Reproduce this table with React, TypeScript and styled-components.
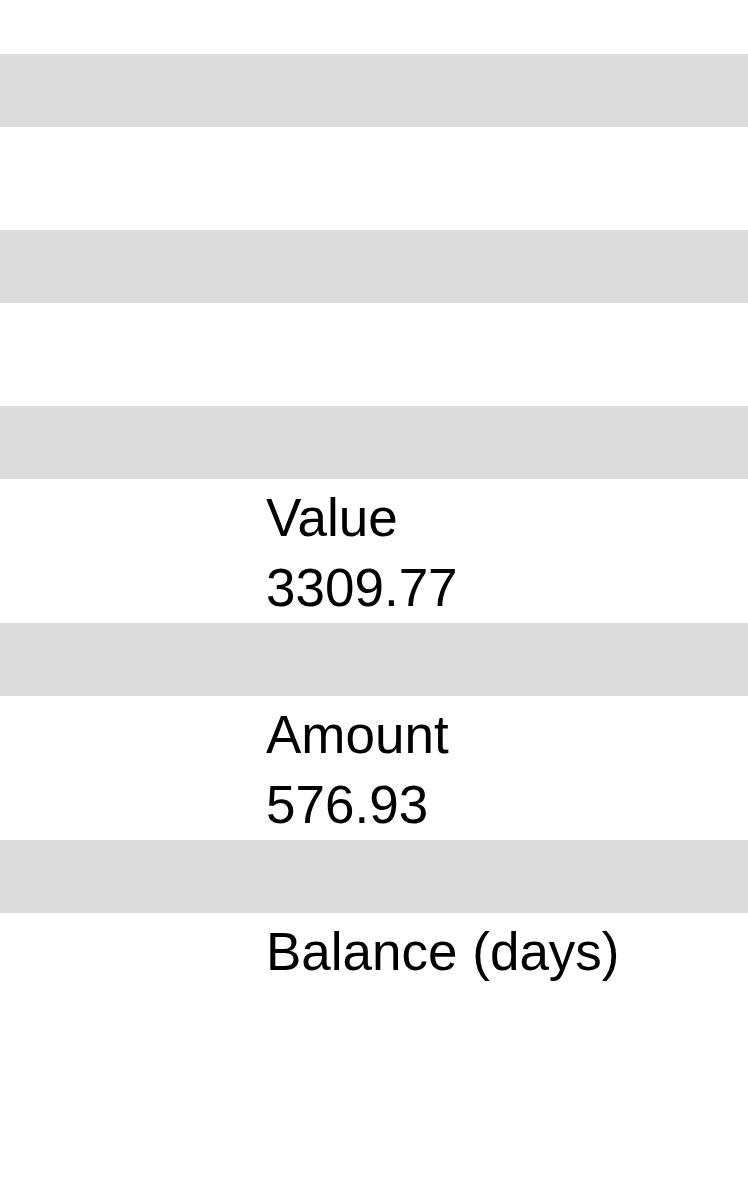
import * as React from 'react';
import styled, { createGlobalStyle } from 'styled-components';

interface Field {
  label?: string
  value?: string
}

const fields: Field[] = [
  {},
  {},
  { label: 'Value', value: '3309.77' },
  { label: 'Amount', value: '576.93' },
  { label: 'Balance (days)' },
];

export default function App() {
  return (
    <>
      <GlobalStyle />
      <Page>
        {fields.map((f, i) =>
          <React.Fragment key={`field_${i}`}>
            <Band />
            <Row empty={!f.label}>
              <Spacer />
              <Cell>
                {f.label && <Line>{f.label}</Line>}
                {f.value && <Line>{f.value}</Line>}
              </Cell>
            </Row>
          </React.Fragment>
        )}
      </Page>
    </>
  );
}

const GlobalStyle = createGlobalStyle`
  html, body {
    margin: 0;
    padding: 0;
    background: #ffffff;
  }
  body {
    font-family: "Liberation Sans", Arial, Helvetica, sans-serif;
    color: #000000;
  }
`;

const Page = styled.div`
  width: 748px;
  min-height: 1180px;
  padding-top: 54px;
  box-sizing: border-box;
  display: flex;
  flex-direction: column;
`;

const Band = styled.div`
  height: 73px;
  background: #dcdcdc;
`;

const Row = styled.div<{ empty: boolean }>`
  display: grid;
  grid-template-columns: 266px 1fr;
  min-height: ${p => (p.empty ? '103px' : '144px')};
  padding-top: 4px;
  box-sizing: border-box;
`;

const Spacer = styled.div``;

const Cell = styled.div`
  display: flex;
  flex-direction: column;
`;

const Line = styled.div`
  font-size: 53px;
  line-height: 70px;
  white-space: nowrap;
`;
